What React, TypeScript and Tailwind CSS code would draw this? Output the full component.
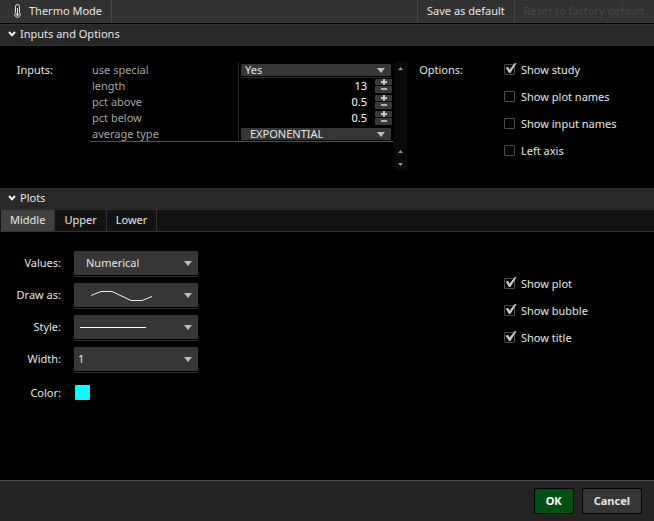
import { useState } from 'react';

const tabs = ['Middle', 'Upper', 'Lower'];

function Arrow({ up = false, className = '' }) {
    return (
        <svg className={className} viewBox="0 0 8 5" fill="currentColor" aria-hidden="true">
            <path d={up ? 'M0 5L4 0L8 5Z' : 'M0 0H8L4 5Z'} />
        </svg>
    );
}

function Chevron() {
    return (
        <svg className="w-2 h-2" viewBox="0 0 8 8" fill="none" stroke="#f0f0f0" strokeWidth="2" aria-hidden="true">
            <path d="M1 2L4 5.2L7 2" />
        </svg>
    );
}

function SectionHeader({ title, open, onClick }) {
    return (
        <h2>
            <button
                className="flex items-center gap-1 w-full h-[22px] px-2 pb-[3px] bg-[#282828] border-t border-b border-t-[#2e2e2e] border-b-[#2e2e2e] text-[#e6e6e6]"
                aria-expanded={open}
                onClick={onClick}
            >
                <Chevron />
                {title}
            </button>
        </h2>
    );
}

function CheckItem({ label, defaultChecked = false }) {
    return (
        <label className="flex items-center gap-[6px] h-[15px]">
            <span className="relative w-[11px] h-[11px]">
                <input
                    type="checkbox"
                    defaultChecked={defaultChecked}
                    className="peer block appearance-none w-[11px] h-[11px] border border-[#4a4a4a] rounded-[1px] bg-black"
                />
                <svg
                    className="absolute left-0 bottom-0 w-[13px] h-[13px] pointer-events-none hidden peer-checked:block"
                    viewBox="0 0 13 13"
                    fill="#c8c8c8"
                    aria-hidden="true"
                >
                    <path d="M1.6 5.6L4.2 5L5.6 7.6L10.6 1.2L12.6 1L6.4 11H5Z" />
                </svg>
            </span>
            {label}
        </label>
    );
}

/* Compact drop-down used inside the inputs table */
function CellSelect({ label, options, className }) {
    return (
        <div className="relative pt-[2px] pb-px border-b border-[#2c2c2c]">
            <select
                aria-label={label}
                className={`block appearance-none w-full h-3 leading-3 bg-[#363636] rounded-[1px] text-[#e6e6e6] ${className}`}
            >
                {options.map((o) => (
                    <option key={o}>{o}</option>
                ))}
            </select>
            <Arrow className="absolute right-[6px] top-[6px] w-2 h-[5px] text-[#bebebe] pointer-events-none" />
        </div>
    );
}

function Spinner({ label, value, step }) {
    const [num, setNum] = useState(value);
    const buttonClass = 'flex items-center justify-center w-[17px] bg-[#3a3a3a] rounded-[1px]';

    return (
        <div className="flex h-4">
            <input
                type="text"
                inputMode="decimal"
                aria-label={label}
                value={num}
                onChange={(e) => setNum(Number(e.target.value) || 0)}
                className="flex-1 min-w-0 h-4 pb-px bg-black text-right text-white"
            />
            <div className="flex flex-col gap-px pt-px ml-2 -mr-px">
                <button className={`${buttonClass} h-[6px]`} aria-label={`Increase ${label}`} onClick={() => setNum(num + step)}>
                    <svg className="w-[6px] h-[6px]" viewBox="0 0 6 6" fill="#c8c8c8" aria-hidden="true">
                        <path d="M2 0H4V2H6V4H4V6H2V4H0V2H2Z" />
                    </svg>
                </button>
                <button className={`${buttonClass} h-[7px]`} aria-label={`Decrease ${label}`} onClick={() => setNum(num - step)}>
                    <svg className="w-[6px] h-[7px]" viewBox="0 0 6 7" fill="#b4b4b4" aria-hidden="true">
                        <path d="M0 2H6V4H0Z" />
                    </svg>
                </button>
            </div>
        </div>
    );
}

function InputRow({ name, children }) {
    return (
        <tr className="h-4">
            <th
                scope="row"
                className="w-[149px] p-0 pl-[2px] align-top text-left font-normal text-[#a5a5a5] border-r border-[#2a2a2a]"
            >
                {name}
            </th>
            <td className="p-0 px-[2px] align-top">{children}</td>
        </tr>
    );
}

function PlotSelect({ id, label, children, drawing = null, className = '' }) {
    return (
        <div className="flex items-center h-8">
            <label htmlFor={id} className="w-[61px] mr-[13px] pb-[3px] text-right">
                {label}
            </label>
            <div className="relative w-[124px] pb-px border-b border-[#2c2c2c]">
                <select
                    id={id}
                    className={`block appearance-none w-full h-6 pb-[2px] bg-[#363636] rounded-[1px] text-[#e6e6e6] ${className}`}
                >
                    {children}
                </select>
                {drawing}
                <Arrow className="absolute right-[6px] top-[10px] w-2 h-[5px] text-[#bebebe] pointer-events-none" />
            </div>
        </div>
    );
}

export default function App() {
    const [inputsOpen, setInputsOpen] = useState(true);
    const [plotsOpen, setPlotsOpen] = useState(true);
    const [activeTab, setActiveTab] = useState('Middle');

    return (
        <div className="flex flex-col min-h-screen bg-black text-[#e6e6e6] text-[11px] leading-[15px] font-['Noto_Sans','Open_Sans',sans-serif]">
            {/* Title bar */}
            <header className="flex h-[23px] mb-px bg-[#323232] border-b border-[#3a3a3a]">
                <h1 className="flex items-center gap-[6px] pl-3 pr-[9px] pb-px border-r border-[#484848]">
                    <svg className="w-[11px] h-[14px]" viewBox="0 0 11 14" fill="none" stroke="#e6e6e6" aria-hidden="true">
                        <path d="M3.5 8.5V2.5A2 2 0 0 1 7.5 2.5V8.5A2.8 2.8 0 1 1 3.5 8.5Z" />
                        <path d="M5.5 4V10" />
                        <circle cx="5.5" cy="10.5" r="1" fill="#e6e6e6" />
                    </svg>
                    Thermo Mode
                </h1>
                <button className="ml-auto px-[9px] pb-px border-l border-[#484848]">Save as default</button>
                <button className="pl-[9px] pr-[10px] pb-px border-l border-[#484848] text-[#484848]" disabled>
                    Reset to factory default
                </button>
            </header>

            <section>
                <SectionHeader title="Inputs and Options" open={inputsOpen} onClick={() => setInputsOpen(!inputsOpen)} />
                {inputsOpen && (
                    <div className="flex pt-4 pb-[18px]">
                        <div className="flex flex-1">
                            <h3 className="w-[53px] mr-[37px] text-right">Inputs:</h3>
                            <div className="flex-1 mr-px">
                                <table className="w-full table-fixed border-separate border-spacing-0">
                                    <tbody>
                                        <InputRow name="use special">
                                            <CellSelect label="use special" options={['Yes']} className="pl-1" />
                                        </InputRow>
                                        <InputRow name="length">
                                            <Spinner label="length" value={13} step={1} />
                                        </InputRow>
                                        <InputRow name="pct above">
                                            <Spinner label="pct above" value={0.5} step={0.1} />
                                        </InputRow>
                                        <InputRow name="pct below">
                                            <Spinner label="pct below" value={0.5} step={0.1} />
                                        </InputRow>
                                        <InputRow name="average type">
                                            <CellSelect label="average type" options={['EXPONENTIAL']} className="pl-[9px]" />
                                        </InputRow>
                                    </tbody>
                                </table>
                                <hr className="-mt-px border-[#505050] relative" />
                            </div>
                            <div className="flex flex-col items-center w-[13px] h-[108px] pt-[5px] pb-1 bg-[#0a0a0a] text-[#969696]">
                                <Arrow up className="w-[5px] h-[3px]" />
                                <Arrow up className="w-[5px] h-[3px] mt-auto" />
                                <Arrow className="w-[5px] h-[3px] mt-[10px]" />
                            </div>
                        </div>
                        <div className="flex w-[247px]">
                            <h3 className="w-14 mr-[41px] text-right">Options:</h3>
                            <div className="flex flex-col gap-3">
                                <CheckItem label="Show study" defaultChecked />
                                <CheckItem label="Show plot names" />
                                <CheckItem label="Show input names" />
                                <CheckItem label="Left axis" />
                            </div>
                        </div>
                    </div>
                )}
            </section>

            <section>
                <SectionHeader title="Plots" open={plotsOpen} onClick={() => setPlotsOpen(!plotsOpen)} />
                {plotsOpen && (
                    <>
                        <div role="tablist" className="flex h-[22px] pl-px bg-[#141414] border-b border-[#323232]">
                            {tabs.map((tab) => (
                                <button
                                    key={tab}
                                    role="tab"
                                    aria-selected={activeTab === tab}
                                    className={`px-[9px] pb-[2px] border-r border-[#323232] ${activeTab === tab ? 'bg-[#414141]' : 'bg-[#141414]'}`}
                                    onClick={() => setActiveTab(tab)}
                                >
                                    {tab}
                                </button>
                            ))}
                        </div>
                        <div className="flex pt-4">
                            <div className="flex-1">
                                <PlotSelect id="values" label="Values:" className="pl-3">
                                    <option>Numerical</option>
                                </PlotSelect>
                                <PlotSelect
                                    id="draw-as"
                                    label="Draw as:"
                                    drawing={
                                        <svg
                                            className="absolute left-4 top-1 w-[64px] h-4 pointer-events-none"
                                            viewBox="0 0 64 16"
                                            fill="none"
                                            stroke="#f0f0f0"
                                            aria-hidden="true"
                                        >
                                            <path d="M1 8.5L11 4.5H22L41 13.5H52L62 9.5" />
                                        </svg>
                                    }
                                >
                                    <option value="line" aria-label="Line" />
                                </PlotSelect>
                                <PlotSelect
                                    id="style"
                                    label="Style:"
                                    drawing={
                                        <svg
                                            className="absolute left-[6px] top-3 w-[66px] h-px pointer-events-none"
                                            viewBox="0 0 66 1"
                                            fill="#ffffff"
                                            aria-hidden="true"
                                        >
                                            <path d="M0 0H66V1H0Z" />
                                        </svg>
                                    }
                                >
                                    <option value="solid" aria-label="Solid" />
                                </PlotSelect>
                                <PlotSelect id="width" label="Width:" className="pl-1">
                                    <option>1</option>
                                </PlotSelect>
                                <div className="flex items-center h-[33px]">
                                    <label htmlFor="color" className="w-[61px] mr-[14px] text-right">
                                        Color:
                                    </label>
                                    <button id="color" className="w-[15px] h-[15px] bg-[#00ffff] rounded-[1px]" />
                                </div>
                            </div>
                            <div className="flex flex-col gap-3 w-[150px] pt-7">
                                <CheckItem label="Show plot" defaultChecked />
                                <CheckItem label="Show bubble" defaultChecked />
                                <CheckItem label="Show title" defaultChecked />
                            </div>
                        </div>
                    </>
                )}
            </section>

            <footer className="flex items-center justify-end gap-2 h-[41px] mt-auto px-3 bg-[#232323] border-t border-[#484848] font-bold">
                <button className="h-[26px] px-[11px] pb-[2px] bg-[#005014] border border-black rounded-[2px] text-white">OK</button>
                <button className="h-[26px] px-[11px] pb-[2px] bg-[#363636] border border-black rounded-[2px]">Cancel</button>
            </footer>
        </div>
    );
}
